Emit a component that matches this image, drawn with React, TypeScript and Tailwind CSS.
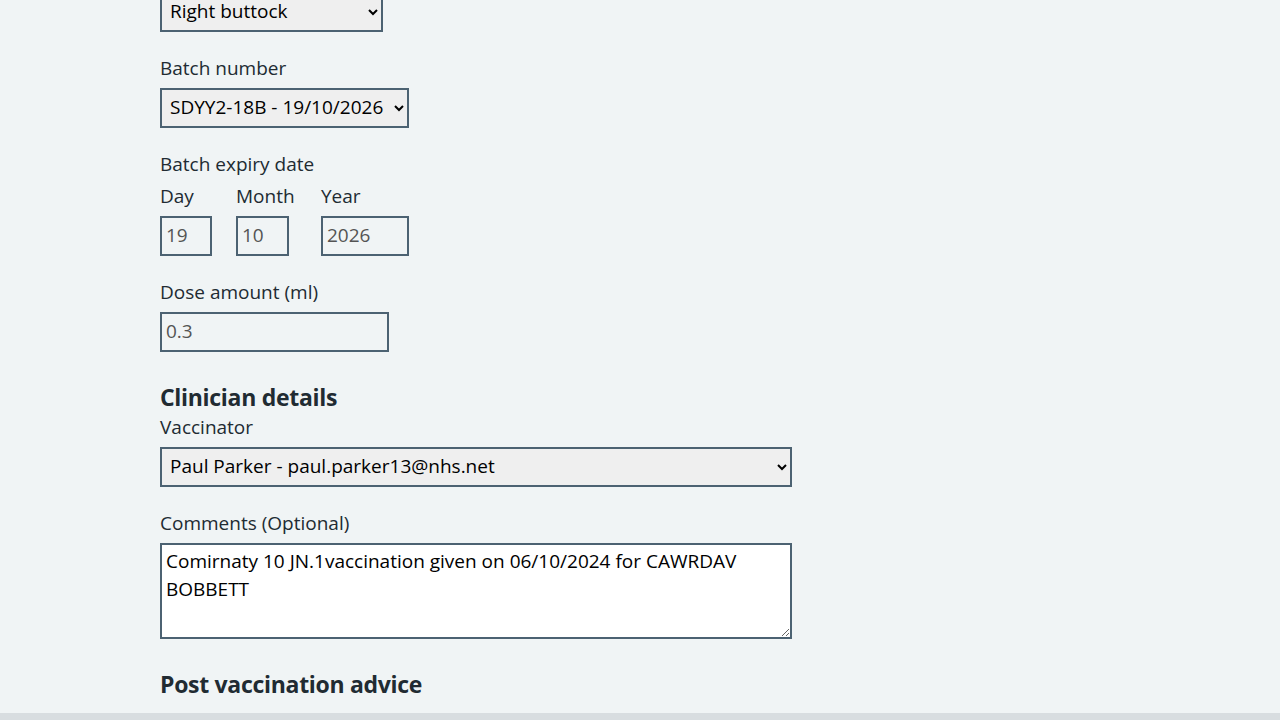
const font = { fontFamily: '"Open Sans", "Liberation Sans", sans-serif' };

function Label({ children, htmlFor }: { children: React.ReactNode; htmlFor?: string }) {
	return (
		<label htmlFor={htmlFor} className="block h-[28px] text-[19px] leading-[28px] text-[#212b32] mb-[6px]">
			{children}
		</label>
	);
}

function DateItem({ label, value, width }: { label: string; value: string; width: string }) {
	return (
		<div className="flex flex-col">
			<label className="block h-[28px] text-[19px] leading-[28px] text-[#212b32] mb-[6px]">{label}</label>
			<input
				type="text"
				defaultValue={value}
				disabled
				className={`${width} h-[40px] border-2 border-[#4c6272] bg-transparent px-[4px] pb-[3px] text-[19px] text-[#545454]`}
			/>
		</div>
	);
}

export default function App() {
	return (
		<div className="min-h-[720px] w-[1280px] bg-[#f0f4f5] overflow-hidden flex flex-col" style={font}>
			<div className="pl-[160px] flex flex-col -mt-[8px]">
				<select
					defaultValue="rb"
					className="w-[223px] h-[40px] border-2 border-[#4c6272] bg-[#efefef] pl-[4px] pr-[4px] pb-[3px] text-[19px] text-black"
				>
					<option value="rb">Right buttock</option>
				</select>

				<div className="mt-[22px]">
					<Label htmlFor="batch">Batch number</Label>
					<select
						id="batch"
						defaultValue="b1"
						className="w-[249px] h-[40px] border-2 border-[#4c6272] bg-[#efefef] pl-[4px] pr-[4px] pb-[3px] text-[19px] text-black"
					>
						<option value="b1">SDYY2-18B - 19/10/2026</option>
					</select>
				</div>

				<div className="mt-[22px]">
					<div className="h-[28px] text-[19px] leading-[28px] text-[#212b32] mb-[4px]">Batch expiry date</div>
					<div className="flex">
						<div className="mr-[24px]">
							<DateItem label="Day" value="19" width="w-[52px]" />
						</div>
						<div className="mr-[24px] min-w-[61px]">
							<DateItem label="Month" value="10" width="w-[53px]" />
						</div>
						<DateItem label="Year" value="2026" width="w-[88px]" />
					</div>
				</div>

				<div className="mt-[22px]">
					<Label htmlFor="dose">Dose amount (ml)</Label>
					<input
						id="dose"
						type="text"
						defaultValue="0.3"
						disabled
						className="w-[229px] h-[40px] border-2 border-[#4c6272] bg-transparent px-[4px] pb-[3px] text-[19px] text-[#545454]"
					/>
				</div>

				<h2 className="mt-[29px] h-[32px] text-[23px] leading-[32px] font-bold text-[#212b32] tracking-[-0.3px]">Clinician details</h2>

				<div>
					<Label htmlFor="vacc">Vaccinator</Label>
					<select
						id="vacc"
						defaultValue="pp"
						className="w-[632px] h-[40px] border-2 border-[#4c6272] bg-[#efefef] pl-[4px] pr-[4px] pb-[2px] text-[19px] text-black"
					>
						<option value="pp">Paul Parker - paul.parker13@nhs.net</option>
					</select>
				</div>

				<div className="mt-[22px]">
					<Label htmlFor="comments">Comments (Optional)</Label>
					<textarea
						id="comments"
						defaultValue="Comirnaty 10 JN.1vaccination given on 06/10/2024 for CAWRDAV BOBBETT"
						className="block w-[632px] h-[96px] border-2 border-[#4c6272] bg-white px-[4px] py-[2px] text-[19px] leading-[28px] text-black"
					/>
				</div>

				<h2 className="mt-[29px] h-[32px] text-[23px] leading-[32px] font-bold text-[#212b32] tracking-[-0.3px]">Post vaccination advice</h2>
			</div>
			<div className="mt-[13px] flex-1 bg-[#d8dde0]" />
		</div>
	);
}
